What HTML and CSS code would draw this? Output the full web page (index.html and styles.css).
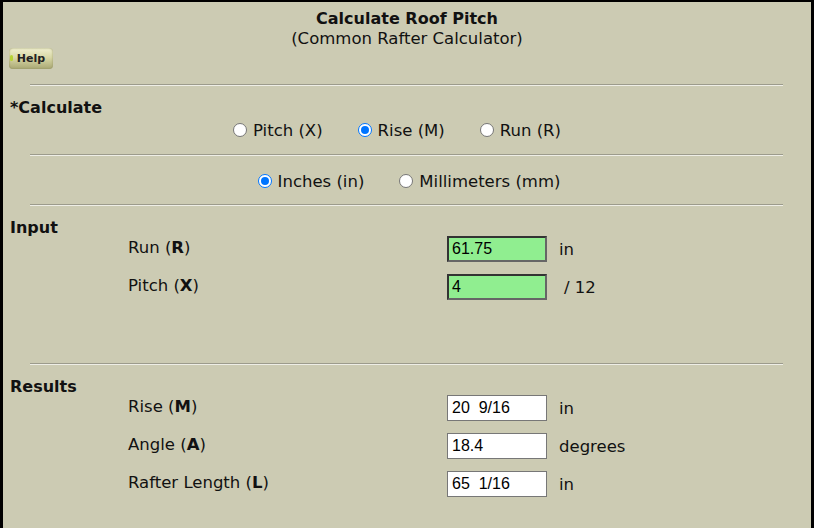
FILE: index.html
```
<!DOCTYPE html>
<html lang="en">
<head>
    <meta charset="UTF-8">
    <title>Calculate Roof Pitch</title>
    <link rel="stylesheet" href="styles.css">
</head>
<body>
    <div class="frame">
        <div class="title">Calculate Roof Pitch</div>
        <div class="subtitle">(Common Rafter Calculator)</div>
        <div class="help-row"><span class="help-btn">Help</span></div>
        <hr class="rule first">

        <div class="section-title calc-title">*Calculate</div>
        <div class="radio-row calc-row">
            <label class="radio"><span class="dot"></span>Pitch (X)</label>
            <label class="radio"><span class="dot on"></span>Rise (M)</label>
            <label class="radio"><span class="dot"></span>Run (R)</label>
        </div>
        <hr class="rule">
        <div class="radio-row unit-row">
            <label class="radio"><span class="dot on"></span>Inches (in)</label>
            <label class="radio"><span class="dot"></span>Millimeters (mm)</label>
        </div>
        <hr class="rule">

        <div class="section-title">Input</div>
        <div class="fields">
            <div class="label">Run (<b>R</b>)</div>
            <div class="box green">61.75</div>
            <div class="unit">in</div>
            <div class="label">Pitch (<b>X</b>)</div>
            <div class="box green">4</div>
            <div class="unit slash">/ 12</div>
        </div>
        <hr class="rule results-rule">

        <div class="section-title">Results</div>
        <div class="fields">
            <div class="label">Rise (<b>M</b>)</div>
            <div class="box">20&nbsp; 9/16</div>
            <div class="unit">in</div>
            <div class="label">Angle (<b>A</b>)</div>
            <div class="box">18.4</div>
            <div class="unit">degrees</div>
            <div class="label">Rafter Length (<b>L</b>)</div>
            <div class="box">65&nbsp; 1/16</div>
            <div class="unit">in</div>
        </div>
    </div>
</body>
</html>
```

FILE: styles.css
```
body {
    margin: 0;
    font-family: "DejaVu Sans", Verdana, sans-serif;
    color: #111;
    overflow: hidden;
}
.frame {
    width: 808px;
    height: 526px;
    background-color: #cccbb3;
    border: 3px solid #000;
    border-top-width: 2px;
    border-bottom: none;
}
.title {
    text-align: center;
    font-weight: bold;
    font-size: 16px;
    line-height: 20px;
    margin-top: 7px;
}
.subtitle {
    text-align: center;
    font-size: 16.5px;
    line-height: 20px;
}
.help-row {
    padding-left: 6px;
    margin-top: -2px;
    height: 22px;
}
.help-btn {
    display: inline-block;
    position: relative;
    width: 44px;
    height: 21px;
    line-height: 21px;
    text-align: center;
    font-family: Verdana, "DejaVu Sans", sans-serif;
    font-weight: bold;
    font-size: 11px;
    color: #222;
    border-radius: 4px;
    background: linear-gradient(to bottom, #efefcf 0%, #d9d8a6 45%, #a9a874 100%);
    box-shadow: inset 0 0 2px #8f8e5e;
}
.help-btn::before {
    content: "";
    position: absolute;
    left: 1px;
    top: 7px;
    width: 3px;
    height: 6px;
    border-radius: 2px;
    background: #b6d234;
}
.rule {
    margin: 0 28px 0 27px;
    height: 0;
    border: none;
    border-top: 1px solid #9c9b8c;
    border-bottom: 1px solid #eeeee6;
}
.rule.first {
    margin-top: 15px;
}
.section-title {
    font-weight: bold;
    font-size: 16px;
    line-height: 20px;
    padding-left: 7px;
    margin-top: 12px;
}
.calc-title {
    margin-top: 12px;
}
.radio-row {
    display: flex;
    justify-content: center;
    font-size: 16.5px;
    line-height: 20px;
}
.calc-row {
    gap: 35px;
    margin: 3px 0 13px;
    padding-right: 20px;
}
.unit-row {
    gap: 35px;
    margin: 16px 0 12px;
    padding-left: 4px;
}
.radio {
    display: flex;
    align-items: center;
}
.dot {
    width: 12px;
    height: 12px;
    border: 1px solid #767676;
    border-radius: 50%;
    background: #fff;
    margin-right: 6px;
    margin-top: -3px;
    position: relative;
}
.dot.on {
    border-color: #0075ff;
}
.dot.on::after {
    content: "";
    position: absolute;
    left: 2px;
    top: 2px;
    width: 8px;
    height: 8px;
    border-radius: 50%;
    background: #0075ff;
}
.fields {
    display: grid;
    grid-template-columns: 319px 112px auto;
    row-gap: 12px;
    padding-left: 125px;
    margin-top: -2px;
    align-items: center;
    font-size: 16.5px;
}
.label {
    align-self: start;
    line-height: 20px;
    padding-top: 2px;
}
.label b {
    font-weight: bold;
}
.box {
    box-sizing: border-box;
    width: 100px;
    height: 26px;
    line-height: 24px;
    padding-left: 4px;
    font-family: "Liberation Sans", Arial, sans-serif;
    font-size: 16px;
    color: #000;
    background: #fff;
    border: 1px solid #777;
    white-space: pre;
}
.box.green {
    background: #90ee90;
    border: 2px solid #333;
    border-right-color: #666;
    border-bottom-color: #666;
    line-height: 22px;
    padding-left: 3px;
}
.slash {
    padding-left: 5px;
}
.results-rule {
    margin-top: 63px;
}
```
